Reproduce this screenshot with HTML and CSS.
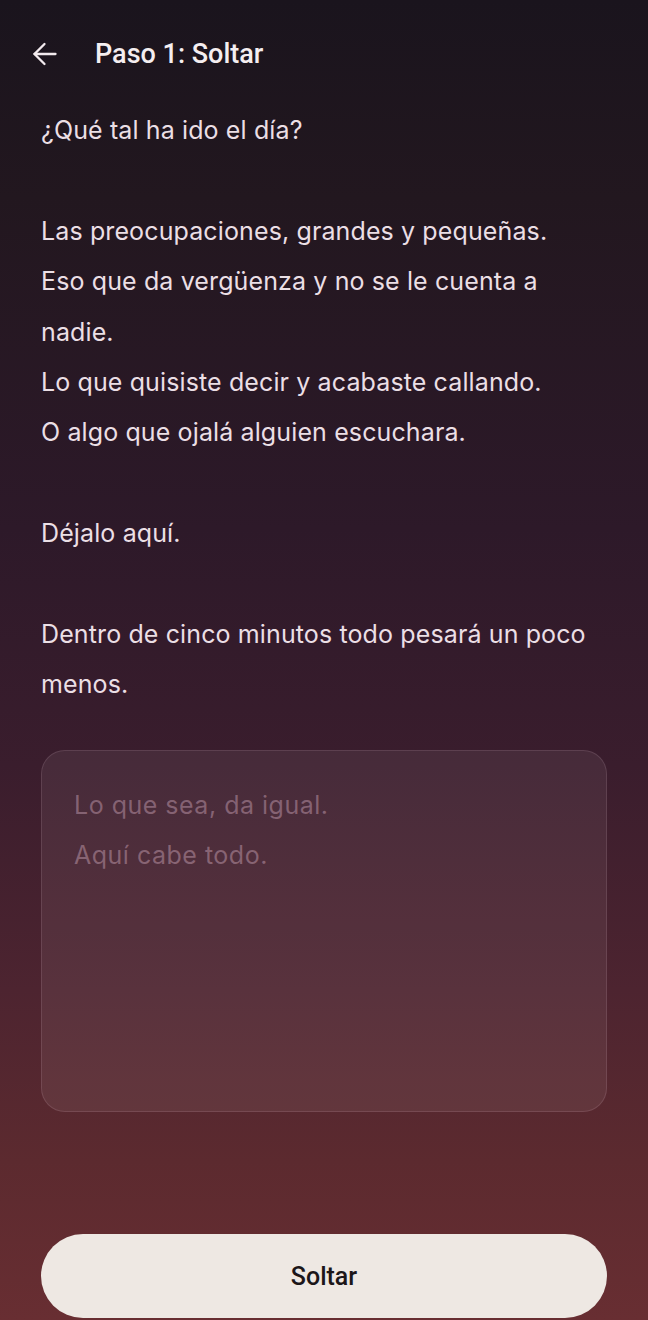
FILE: index.html
```html
<!DOCTYPE html>
<html lang="es">
<head>
<meta charset="utf-8">
<title>Paso 1: Soltar</title>
<link rel="stylesheet" href="styles.css">
</head>
<body>
<div class="screen">
  <header class="topbar">
    <button class="back" aria-label="Atrás">
      <svg width="26" height="26" viewBox="0 0 26 26" fill="none" stroke="#f2eaee" stroke-width="2.3" stroke-linecap="round" stroke-linejoin="round">
        <path d="M23.5 13H2.5"/>
        <path d="M12.5 3L2.5 13L12.5 23"/>
      </svg>
    </button>
    <h1 class="title">Paso 1: Soltar</h1>
  </header>
  <main class="content">
    <div class="intro">
      <p>¿Qué tal ha ido el día?</p>
      <p>Las preocupaciones, grandes y pequeñas.<br>Eso que da vergüenza y no se le cuenta a nadie.<br>Lo que quisiste decir y acabaste callando.<br>O algo que ojalá alguien escuchara.</p>
      <p>Déjalo aquí.</p>
      <p>Dentro de cinco minutos todo pesará un poco menos.</p>
    </div>
    <textarea class="entry" placeholder="Lo que sea, da igual.&#10;Aquí cabe todo."></textarea>
  </main>
  <div class="actions">
    <button class="primary">Soltar</button>
  </div>
</div>
</body>
</html>
```
FILE: styles.css
```css
* { box-sizing: border-box; }
html, body {
  margin: 0;
  padding: 0;
}
body {
  background: #1b141e;
  font-family: Inter, "Noto Sans", sans-serif;
}
.screen {
  min-height: 1320px;
  display: flex;
  flex-direction: column;
  background: linear-gradient(180deg, #1a141d 0%, #22171f 15%, #2d1929 40%, #3a1d2d 58%, #4d2430 75%, #5c2a2f 88%, #682e32 100%);
  padding: 0 41px;
}
.topbar {
  display: flex;
  align-items: center;
  height: 107px;
  gap: 37px;
  margin-left: -10px;
}
.back {
  background: none;
  border: 0;
  padding: 0;
  width: 26px;
  height: 26px;
  display: flex;
  align-items: center;
  justify-content: center;
  margin-left: 1px;
}
.back svg { display: block; }
.title {
  margin: 0;
  font-family: Roboto, "Noto Sans", sans-serif;
  font-weight: 500;
  font-size: 27px;
  color: #f4eef0;
  letter-spacing: 0;
}
.content {
  display: flex;
  flex-direction: column;
}
.intro p {
  margin: 0 0 50.4px;
  font-size: 25px;
  line-height: 50.4px;
  color: #ebdfe5;
  letter-spacing: 0.12px;
}
.intro p:first-child { margin-top: -2px; }
.intro p:last-child { margin-bottom: 40px; }
.entry {
  width: 100%;
  height: 362px;
  resize: none;
  border-radius: 24px;
  border: 1px solid rgba(255, 220, 235, 0.12);
  background: rgba(255, 235, 245, 0.07);
  padding: 29px 32px;
  font-family: Inter, "Noto Sans", sans-serif;
  font-size: 25px;
  line-height: 50.4px;
  letter-spacing: 0.5px;
  color: #ebdfe5;
  outline: none;
}
.entry::placeholder {
  color: rgba(230, 190, 210, 0.38);
}
.actions {
  margin-top: auto;
  padding-bottom: 2px;
}
.primary {
  width: 100%;
  height: 84px;
  border: 0;
  border-radius: 42px;
  background: #eee8e3;
  color: #1c1619;
  font-family: Roboto, "Noto Sans", sans-serif;
  font-weight: 500;
  font-size: 25px;
}
```
